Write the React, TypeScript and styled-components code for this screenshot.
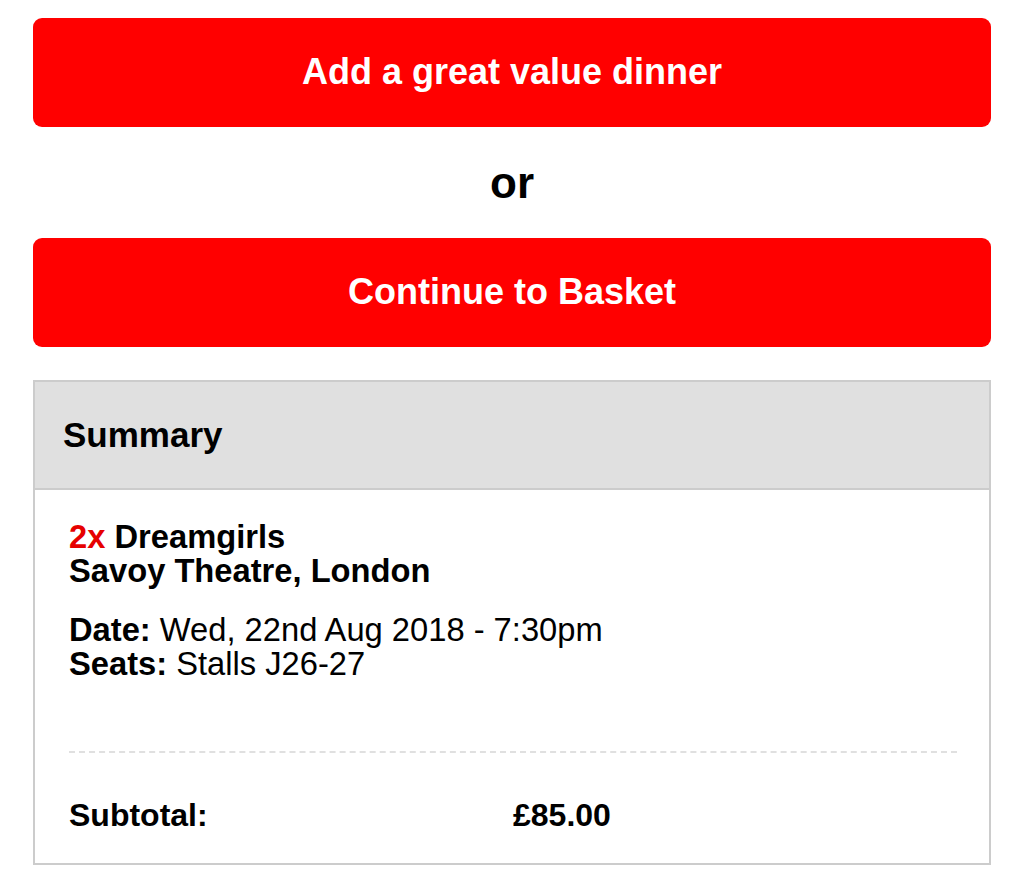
import styled, { createGlobalStyle } from "styled-components"

const GlobalStyle = createGlobalStyle`
  html, body {
    margin: 0;
    padding: 0;
    background: #fff;
  }
  body {
    font-family: "Liberation Sans", Arial, Helvetica, sans-serif;
    color: #000;
  }
`

const Page = styled.div`
  display: flex;
  flex-direction: column;
  padding: 18px 33px 8px;
`

const ActionButton = styled.button`
  display: flex;
  align-items: center;
  justify-content: center;
  width: 100%;
  height: 109px;
  padding: 0 0 2px;
  border: none;
  border-radius: 9px;
  background: #ff0000;
  color: #fff;
  font-family: "Liberation Sans", Arial, sans-serif;
  font-weight: bold;
  font-size: 36px;
  cursor: pointer;
`

const Or = styled.div`
  height: 111px;
  display: flex;
  align-items: center;
  justify-content: center;
  font-weight: bold;
  font-size: 44px;
`

const Summary = styled.section`
  margin-top: 33px;
  border: 2px solid #cccccc;
  display: flex;
  flex-direction: column;
`

const SummaryHeader = styled.div`
  height: 106px;
  display: flex;
  align-items: center;
  padding-left: 28px;
  background: #e0e0e0;
  border-bottom: 2px solid #cccccc;
  font-weight: bold;
  font-size: 35px;
`

const SummaryBody = styled.div`
  display: flex;
  flex-direction: column;
  padding: 30px 32px 31px 34px;
  font-size: 32.7px;
`

const Block = styled.div<{ $gap?: number }>`
  margin-top: ${({ $gap }) => $gap || 0}px;
  line-height: 34px;
`

const Strong = styled.b`
  font-weight: bold;
`

const Qty = styled.span`
  color: #e60000;
`

const Divider = styled.hr`
  margin: 70px 0 0;
  border: none;
  border-top: 2px dashed #e0e0e0;
`

const TotalRow = styled.div`
  display: grid;
  grid-template-columns: 1fr 1fr;
  margin-top: 45px;
  font-size: 32px;
  font-weight: bold;
  line-height: 34px;
`

export default function App() {
  return (
    <Page>
      <GlobalStyle />
      <ActionButton>Add a great value dinner</ActionButton>
      <Or>or</Or>
      <ActionButton>Continue to Basket</ActionButton>
      <Summary>
        <SummaryHeader>Summary</SummaryHeader>
        <SummaryBody>
          <Block>
            <Strong>
              <Qty>2x</Qty> Dreamgirls
            </Strong>
            <br />
            <Strong>Savoy Theatre, London</Strong>
          </Block>
          <Block $gap={25}>
            <Strong>Date:</Strong> Wed, 22nd Aug 2018 - 7:30pm
            <br />
            <Strong>Seats:</Strong> Stalls J26-27
          </Block>
          <Divider />
          <TotalRow>
            <span>Subtotal:</span>
            <span>£85.00</span>
          </TotalRow>
        </SummaryBody>
      </Summary>
    </Page>
  )
}
